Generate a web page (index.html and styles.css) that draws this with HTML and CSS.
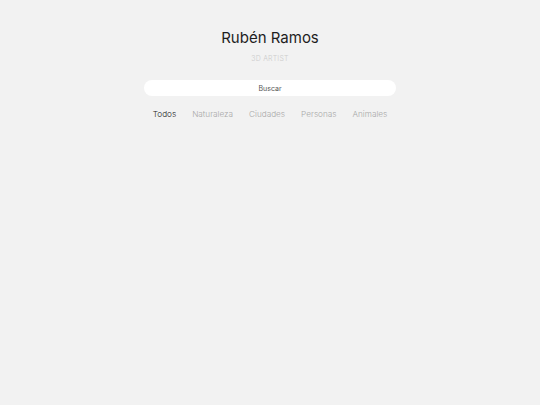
FILE: index.html
```html
<!DOCTYPE html>
<html lang="es">
<head>
<meta charset="utf-8">
<title>Rubén Ramos</title>
<link rel="stylesheet" href="styles.css">
</head>
<body>
<header class="header">
  <h1 class="title">Rubén Ramos</h1>
  <p class="subtitle">3D ARTIST</p>
  <div class="search">Buscar</div>
  <nav class="tabs">
    <span class="tab active">Todos</span>
    <span class="tab">Naturaleza</span>
    <span class="tab">Ciudades</span>
    <span class="tab">Personas</span>
    <span class="tab">Animales</span>
  </nav>
</header>
</body>
</html>
```

FILE: styles.css
```css
html, body {
  margin: 0;
  padding: 0;
  background: #f2f2f2;
  height: 100%;
}
body {
  font-family: "Inter", "Open Sans", sans-serif;
}
.header {
  display: flex;
  flex-direction: column;
  align-items: center;
  padding-top: 29px;
}
.title {
  margin: 0;
  font-size: 15px;
  font-weight: 400;
  color: #1e1e1e;
  line-height: 18px;
}
.subtitle {
  margin: 7px 0 0;
  font-size: 7px;
  line-height: 9px;
  color: #cccccc;
  letter-spacing: 0.2px;
  font-weight: 300;
}
.search {
  margin-top: 17px;
  width: 252px;
  height: 16px;
  border-radius: 8px;
  background: #ffffff;
  display: flex;
  align-items: center;
  justify-content: center;
  font-size: 7px;
  color: #555;
}
.tabs {
  margin-top: 13px;
  display: flex;
  gap: 16px;
}
.tab {
  font-size: 8.2px;
  line-height: 11px;
  color: #a8a8a8;
  font-weight: 300;
}
.tab.active {
  color: #222;
}
```
